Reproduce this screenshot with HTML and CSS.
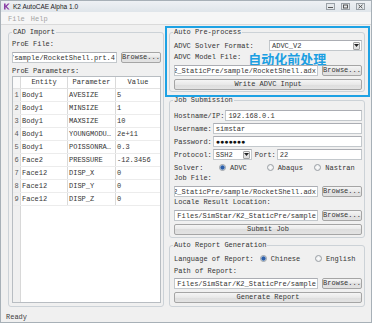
FILE: index.html
```html
<!DOCTYPE html>
<html lang="en">
<head>
    <meta charset="UTF-8">
    <title>K2 AutoCAE Alpha 1.0</title>
    <link rel="stylesheet" href="styles.css">
</head>
<body>
    <div class="window">
        <div class="titlebar">
            <svg class="app-icon" width="7" height="7" viewBox="0 0 7 7">
                <path d="M1 0.5 L2.6 0.5 L2.6 2.8 L5 0.5 L6.6 0.5 L3.8 3.4 L6.6 6.5 L5 6.5 L2.6 4 L2.6 6.5 L1 6.5 Z" fill="#8b3fa6"/>
            </svg>
            <span class="title">K2 AutoCAE Alpha 1.0</span>
            <div class="win-btns">
                <svg width="9" height="7" viewBox="0 0 9 7"><rect x="0.5" y="0.5" width="8" height="6" fill="#e4e8eb" stroke="#9aa1a7"/><rect x="2" y="4" width="5" height="1" fill="#555"/></svg>
                <svg width="9" height="7" viewBox="0 0 9 7"><rect x="0.5" y="0.5" width="8" height="6" fill="#e4e8eb" stroke="#9aa1a7"/><rect x="2.5" y="2" width="4" height="3" fill="none" stroke="#555"/></svg>
                <svg width="9" height="7" viewBox="0 0 9 7"><rect x="0.5" y="0.5" width="8" height="6" fill="#e4e8eb" stroke="#9aa1a7"/><path d="M2.5 1.8 L6.5 5.2 M6.5 1.8 L2.5 5.2" stroke="#555"/></svg>
            </div>
        </div>
        <div class="menubar">
            <span>File</span>
            <span>Help</span>
        </div>

        <div class="main">
            <fieldset class="group cad">
                <legend>CAD Import</legend>
                <div class="text-line mt4">ProE File:</div>
                <div class="row mt4">
                    <div class="input path"><span>C:/Program Files/SimStar/K2_StaticPre/sample/RocketShell.prt.4</span></div>
                    <button class="btn browse">Browse...</button>
                </div>
                <div class="text-line mt4">ProE Parameters:</div>
                <div class="grid-view">
                    <div class="tr th"><span></span><span>Entity</span><span>Parameter</span><span>Value</span></div>
                    <div class="tr"><span>1</span><span>Body1</span><span>AVESIZE</span><span>5</span></div>
                    <div class="tr"><span>2</span><span>Body1</span><span>MINSIZE</span><span>1</span></div>
                    <div class="tr"><span>3</span><span>Body1</span><span>MAXSIZE</span><span>10</span></div>
                    <div class="tr"><span>4</span><span>Body1</span><span>YOUNGMODULUS</span><span>2e+11</span></div>
                    <div class="tr"><span>5</span><span>Body1</span><span>POISSONRATIO</span><span>0.3</span></div>
                    <div class="tr"><span>6</span><span>Face2</span><span>PRESSURE</span><span>-12.3456</span></div>
                    <div class="tr"><span>7</span><span>Face12</span><span>DISP_X</span><span>0</span></div>
                    <div class="tr"><span>8</span><span>Face12</span><span>DISP_Y</span><span>0</span></div>
                    <div class="tr"><span>9</span><span>Face12</span><span>DISP_Z</span><span>0</span></div>
                </div>
            </fieldset>

            <div class="right">
                <div class="highlight">
                    <fieldset class="group">
                        <legend>Auto Pre-process</legend>
                        <div class="row mt4">
                            <span class="lbl w95">ADVC Solver Format:</span>
                            <div class="input combo"><span>ADVC_V2</span><span class="arrow"><svg width="5" height="3" viewBox="0 0 5 3"><path d="M0 0 L5 0 L2.5 3 Z" fill="#222"/></svg></span></div>
                        </div>
                        <div class="row text-row mt2">
                            <span class="lbl">ADVC Model File:</span>
                            <span class="note">自动化前处理</span>
                        </div>
                        <div class="row mt4">
                            <div class="input path"><span>C:/Program Files/SimStar/K2_StaticPre/sample/RocketShell.adx</span></div>
                            <button class="btn browse">Browse...</button>
                        </div>
                        <button class="btn wide mt3">Write ADVC Input</button>
                    </fieldset>
                </div>

                <fieldset class="group job">
                    <legend>Job Submission</legend>
                    <div class="row mt6">
                        <span class="lbl">Hostname/IP:</span>
                        <div class="input">192.168.0.1</div>
                    </div>
                    <div class="row mt2">
                        <span class="lbl">Username:</span>
                        <div class="input">simstar</div>
                    </div>
                    <div class="row mt2">
                        <span class="lbl">Password:</span>
                        <div class="input dots">●●●●●●●</div>
                    </div>
                    <div class="row mt2">
                        <span class="lbl">Protocol:</span>
                        <div class="input combo proto"><span>SSH2</span><span class="arrow"><svg width="5" height="3" viewBox="0 0 5 3"><path d="M0 0 L5 0 L2.5 3 Z" fill="#222"/></svg></span></div>
                        <span class="lbl port">Port:</span>
                        <div class="input">22</div>
                    </div>
                    <div class="row mt2">
                        <span class="lbl w45">Solver:</span>
                        <label class="radio"><span class="dot checked"></span>ADVC</label>
                        <label class="radio"><span class="dot"></span>Abaqus</label>
                        <label class="radio"><span class="dot"></span>Nastran</label>
                    </div>
                    <div class="text-line mt1">Job File:</div>
                    <div class="row mt4">
                        <div class="input path"><span>C:/Program Files/SimStar/K2_StaticPre/sample/RocketShell.adx</span></div>
                        <button class="btn browse">Browse...</button>
                    </div>
                    <div class="text-line mt1">Locale Result Location:</div>
                    <div class="row mt4">
                        <div class="input path"><span>C:/Program Files/SimStar/K2_StaticPre/sample</span></div>
                        <button class="btn browse">Browse...</button>
                    </div>
                    <button class="btn wide mt3">Submit Job</button>
                </fieldset>

                <fieldset class="group report">
                    <legend>Auto Report Generation</legend>
                    <div class="row mt4">
                        <span class="lbl">Language of Report:</span>
                        <label class="radio first"><span class="dot checked"></span>Chinese</label>
                        <label class="radio last"><span class="dot"></span>English</label>
                    </div>
                    <div class="text-line mt3">Path of Report:</div>
                    <div class="row mt3">
                        <div class="input path"><span>C:/Program Files/SimStar/K2_StaticPre/sample</span></div>
                        <button class="btn browse">Browse...</button>
                    </div>
                    <button class="btn wide mt3">Generate Report</button>
                </fieldset>
            </div>
        </div>

        <div class="statusbar">Ready</div>
    </div>
</body>
</html>
```

FILE: styles.css
```css
* {
    box-sizing: border-box;
}

body {
    margin: 0;
    background: #fff;
    font-family: 'Liberation Mono', 'DejaVu Sans Mono', monospace;
    font-size: 7px;
    color: #353535;
}

.window {
    width: 372px;
    height: 323px;
    background: #f0f0f0;
    border: 1px solid #a7b0b7;
    display: flex;
    flex-direction: column;
}

/* title + menu */
.titlebar {
    height: 11px;
    display: flex;
    align-items: center;
    padding-left: 2px;
    background: linear-gradient(#eef1f4, #dfe5ea);
}

.app-icon {
    margin-right: 3px;
}

.title {
    font-family: 'Liberation Sans', sans-serif;
    font-size: 6.5px;
    color: #222;
}

.win-btns {
    margin-left: auto;
    margin-right: 6px;
    display: flex;
    gap: 6px;
}

.menubar {
    height: 13px;
    display: flex;
    align-items: center;
    gap: 6px;
    padding-left: 7px;
    padding-top: 1px;
    background: #f6f6f6;
    border-bottom: 1px solid #dadada;
    color: #a3a3a3;
}

.main {
    flex: 1;
    display: flex;
    align-items: flex-start;
    padding-left: 7px;
}

/* group boxes */
.group {
    margin: 0;
    min-width: 0;
    padding: 0 2px 1px 4px;
    border: 1px solid #ccd2d7;
    border-radius: 3px;
}

.group legend {
    padding: 0 1px;
    margin-left: -1px;
    line-height: 8px;
}

.cad {
    width: 156px;
    margin-top: 3px;
    padding: 0 2px 3px 3px;
}

.cad legend {
    margin-left: 0;
}

.right {
    width: 205px;
    margin-left: 1px;
    display: flex;
    flex-direction: column;
}

.highlight {
    margin-top: 1px;
    border: 2px solid #1ea2e4;
    padding: 0 3px 3px 2px;
}

.job {
    margin: -1px 5px 0 4px;
    padding-bottom: 2px;
}

.report {
    margin: 3px 5px 0 4px;
    padding-bottom: 3px;
}

/* rows */
.row {
    display: flex;
    align-items: center;
    height: 11px;
}

.text-line,
.text-row {
    height: 8px;
    line-height: 8px;
    white-space: nowrap;
}

.mt1 { margin-top: 1px; }
.mt2 { margin-top: 2px; }
.mt3 { margin-top: 3px; }
.mt4 { margin-top: 4px; }
.mt6 { margin-top: 6px; }

.lbl {
    flex: none;
    margin-right: 1px;
    white-space: nowrap;
}

.w95 { width: 95px; margin-right: 0; }
.w45 { width: 45px; margin-right: 0; }

.lbl.port {
    margin-left: 3px;
}

.note {
    margin-left: 6px;
    padding-top: 3px;
    font-family: 'Noto Sans CJK SC', sans-serif;
    font-size: 13px;
    font-weight: bold;
    line-height: 8px;
    color: #1c9fe2;
}

/* inputs */
.input {
    flex: 1;
    min-width: 0;
    height: 11px;
    display: flex;
    align-items: center;
    padding: 0 2px;
    background: #fff;
    border: 1px solid #c3c8cc;
    border-top-color: #abadb3;
    white-space: nowrap;
    overflow: hidden;
}

.input.path {
    justify-content: flex-end;
    padding-right: 1px;
}

.input.dots {
    color: #111;
}

.combo {
    padding-right: 1px;
    justify-content: space-between;
}

.combo.proto {
    flex: none;
    width: 39px;
}

.arrow {
    width: 7px;
    height: 8px;
    display: flex;
    align-items: center;
    justify-content: center;
    border: 1px solid #a2a2a2;
    border-radius: 1px;
    background: linear-gradient(#f4f4f4, #dcdcdc);
}

/* buttons */
.btn {
    height: 11px;
    padding: 0;
    font: inherit;
    line-height: 9px;
    color: #353535;
    border: 1px solid #a5a5a5;
    border-radius: 2px;
    background: linear-gradient(#f5f5f5, #e8e8e8 50%, #dddddd 50%, #e3e3e3);
}

.btn.browse {
    flex: none;
    width: 40px;
    margin-left: 4px;
}

.btn.wide {
    display: block;
    width: 100%;
}

/* radios */
.radio {
    flex: 1;
    display: flex;
    align-items: center;
    white-space: nowrap;
}

.radio.first {
    padding-left: 5px;
}

.radio.last {
    flex: none;
    width: 47px;
}

.dot {
    width: 7px;
    height: 7px;
    margin-right: 4px;
    border-radius: 50%;
    border: 1px solid #9a9fa4;
    background: radial-gradient(#fdfdfd, #e2e4e6);
}

.dot.checked {
    background: radial-gradient(#2d5ea8 0 1.6px, #7fa4d4 2.2px, #eef1f4 2.4px);
}

/* parameter table */
.grid-view {
    height: 227px;
    margin-top: 1px;
    border: 1px solid #b8bdc2;
    background: linear-gradient(to right, #f0f0f0 7px, #d8d8d8 7px 8px, #fff 8px);
}

.tr {
    display: grid;
    grid-template-columns: 8px 47px 48px 1fr;
    height: 13px;
    border-bottom: 1px solid #ececec;
}

.tr span {
    padding-left: 1px;
    line-height: 12px;
    border-right: 1px solid #dadada;
    white-space: nowrap;
    overflow: hidden;
    text-overflow: ellipsis;
}

.tr span:first-child {
    padding: 0;
    text-align: center;
    color: #5a5a5a;
    background: #f0f0f0;
}

.tr span:last-child {
    border-right: 0;
}

.th {
    height: 12px;
    background: #fff;
    border-bottom-color: #e2e2e2;
}

.th span {
    text-align: center;
    line-height: 11px;
    padding: 0;
}

.th span:first-child {
    background: #fafafa;
}

.statusbar {
    height: 10px;
    line-height: 10px;
    padding-left: 5px;
    color: #404040;
}
```
